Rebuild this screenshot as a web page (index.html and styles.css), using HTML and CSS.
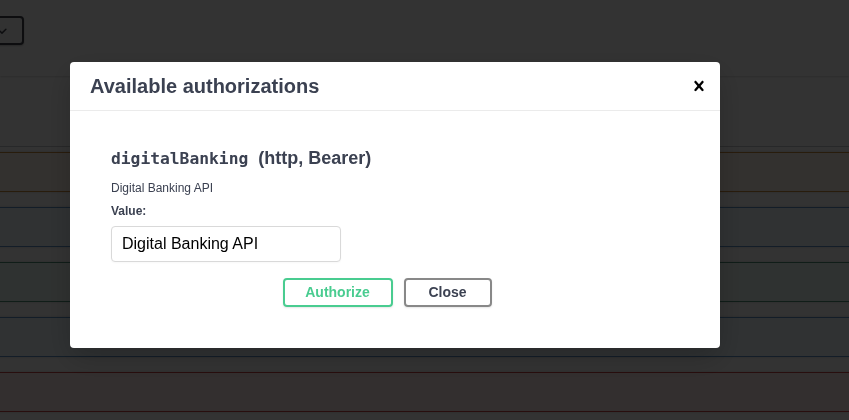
FILE: index.html
```html
<!DOCTYPE html>
<html lang="en">
<head>
<meta charset="utf-8">
<title>Available authorizations</title>
<link rel="stylesheet" href="styles.css">
</head>
<body>
<div class="page">
  <div class="scheme-bar">
    <div class="select">
      <svg class="select-arrow" viewBox="0 0 20 20" width="20" height="20"><path d="M13.418 7.859a.695.695 0 01.978 0 .68.68 0 010 .969l-3.908 3.83a.697.697 0 01-.979 0l-3.908-3.83a.68.68 0 010-.969.695.695 0 01.978 0L10 11l3.418-3.141z" fill="#41444e"/></svg>
    </div>
  </div>
  <div class="tag"></div>
  <div class="ops">
    <div class="opblock put"></div>
    <div class="opblock get"></div>
    <div class="opblock post"></div>
    <div class="opblock get"></div>
    <div class="opblock delete"></div>
  </div>
</div>

<div class="overlay">
  <div class="modal">
    <div class="modal-header">
      <h3 class="modal-title">Available authorizations</h3>
      <button class="close-modal" type="button" aria-label="Close">
        <svg viewBox="0 0 20 20" width="20" height="20"><path d="M14.348 14.849c-.469.469-1.229.469-1.697 0L10 11.819l-2.651 3.029c-.469.469-1.229.469-1.697 0-.469-.469-.469-1.229 0-1.697l2.758-3.15-2.759-3.152c-.469-.469-.469-1.228 0-1.697.469-.469 1.228-.469 1.697 0L10 8.183l2.651-3.031c.469-.469 1.228-.469 1.697 0 .469.469.469 1.229 0 1.697l-2.758 3.152 2.758 3.15c.469.469.469 1.229 0 1.698z" fill="#000"/></svg>
      </button>
    </div>
    <div class="modal-body">
      <div class="auth-container">
        <h4 class="auth-name"><code>digitalBanking</code>&nbsp;(http, Bearer)</h4>
        <p class="auth-desc">Digital Banking API</p>
        <label class="auth-label">Value:</label>
        <input class="auth-input" type="text" value="Digital Banking API">
      </div>
      <div class="auth-btn-wrapper">
        <button class="btn btn-authorize" type="button">Authorize</button>
        <button class="btn btn-done" type="button">Close</button>
      </div>
    </div>
  </div>
</div>
</body>
</html>
```

FILE: styles.css
```css
* { box-sizing: border-box; }

html, body {
  margin: 0;
  padding: 0;
  height: 100%;
}

body {
  background: #fff;
  font-family: "Liberation Sans", Arial, sans-serif;
  color: #3b4151;
  overflow: hidden;
}

.page {
  width: 100%;
}

.scheme-bar {
  height: 76px;
  padding-top: 16px;
  background: #fff;
  box-shadow: 0 1px 2px 0 rgba(0, 0, 0, .15);
  display: flex;
  align-items: flex-start;
}

.select {
  width: 80px;
  height: 29px;
  margin-left: -56px;
  border: 2px solid #41444e;
  border-radius: 4px;
  background: #f7f7f7;
  box-shadow: 0 1px 2px 0 rgba(0, 0, 0, .25);
  display: flex;
  align-items: center;
  justify-content: flex-end;
  padding-right: 10px;
}

.select-arrow { display: block; }

.tag {
  height: 71px;
  border-bottom: 1px solid rgba(59, 65, 81, .3);
}

.ops {
  padding-top: 5px;
  margin: 0 -20px;
}

.opblock {
  height: 40px;
  border: 1px solid #000;
  border-radius: 4px;
  margin-bottom: 15px;
  box-shadow: 0 0 3px rgba(0, 0, 0, .19);
}

.opblock.put { background: rgba(252, 161, 48, .1); border-color: #c98a3e; }
.opblock.get { background: rgba(97, 175, 254, .1); border-color: #5f93c7; }
.opblock.post { background: rgba(73, 204, 144, .1); border-color: #4f8f78; }
.opblock.delete { background: rgba(249, 62, 62, .1); border-color: #c74646; }

.overlay {
  position: fixed;
  inset: 0;
  background: rgba(0, 0, 0, .8);
  padding: 62px 0 0 70px;
}

.modal {
  width: 650px;
  background: #fff;
  border-radius: 4px;
  box-shadow: 0 10px 30px 0 rgba(0, 0, 0, .2);
}

.modal-header {
  display: flex;
  align-items: center;
  justify-content: space-between;
  padding: 12px 11px 12px 20px;
  border-bottom: 1px solid #ebebeb;
}

.modal-title {
  margin: 0;
  font-size: 20px;
  line-height: 24px;
  font-weight: 700;
  color: #3b4151;
}

.close-modal {
  border: none;
  background: none;
  padding: 0;
  width: 20px;
  height: 20px;
  display: flex;
}

.modal-body {
  padding: 30px 20px 41px 20px;
}

.auth-container {
  padding: 0 21px;
  display: flex;
  flex-direction: column;
  align-items: flex-start;
}

.auth-name {
  margin: 7px 0 0;
  font-size: 18px;
  line-height: 21px;
  font-weight: 700;
  color: #3b4151;
}

.auth-name code {
  font-family: "DejaVu Sans Mono", "Liberation Mono", monospace;
  font-size: 16.3px;
  font-weight: 700;
  margin-right: 5px;
}

.auth-desc {
  margin: 12px 0 0;
  font-size: 12px;
  line-height: 14px;
  color: #3b4151;
}

.auth-label {
  margin-top: 9px;
  font-size: 12px;
  line-height: 14px;
  font-weight: 700;
  color: #3b4151;
}

.auth-input {
  margin-top: 8px;
  width: 230px;
  height: 36px;
  padding: 0 10px;
  border: 1px solid #d9d9d9;
  border-radius: 4px;
  background: #fff;
  font-family: "Liberation Sans", Arial, sans-serif;
  font-size: 16px;
  color: #000;
  box-shadow: 0 1px 2px rgba(0, 0, 0, .03);
}

.auth-btn-wrapper {
  margin-top: 16px;
  display: flex;
  justify-content: center;
}

.btn {
  height: 29px;
  padding: 0;
  border: 2px solid #888;
  border-radius: 4px;
  background: transparent;
  box-shadow: 0 1px 2px rgba(0, 0, 0, .1);
  font-family: "Liberation Sans", Arial, sans-serif;
  font-size: 14px;
  font-weight: 700;
  line-height: 17px;
  color: #3b4151;
}

.btn-authorize {
  width: 110px;
  margin-right: 11px;
  border-color: #49cc90;
  color: #49cc90;
}

.btn-done {
  width: 88px;
  margin-right: 16px;
}
```
